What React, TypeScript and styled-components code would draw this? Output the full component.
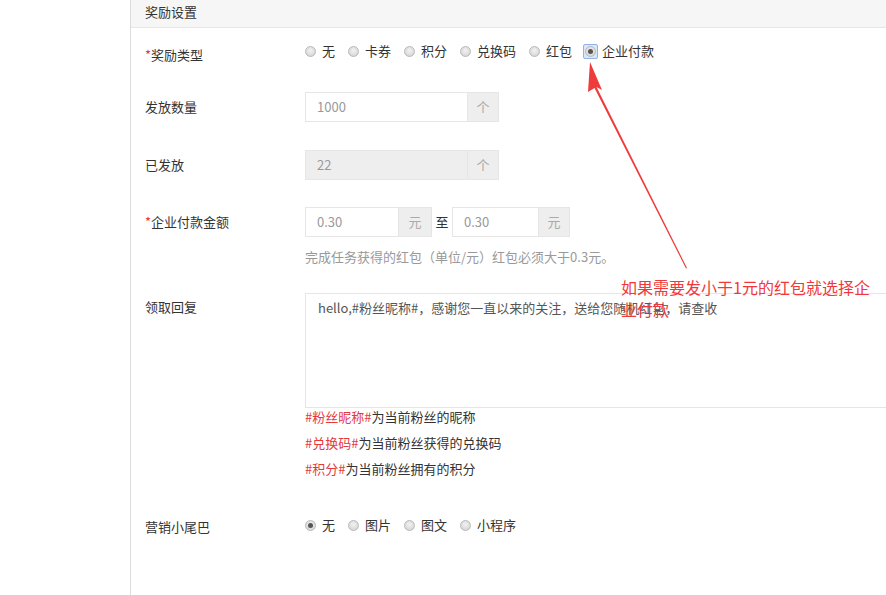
import React from "react";
import styled, { createGlobalStyle } from "styled-components";

const Global = createGlobalStyle`
  html, body { margin: 0; padding: 0; background: #fff; }
  body { font-family: "Microsoft YaHei", "Noto Sans CJK SC", sans-serif; font-size: 13px; color: #333; }
  * { box-sizing: border-box; }
`;

const Page = styled.div`
  position: relative;
  display: flex;
  width: 886px;
  height: 595px;
  overflow: hidden;
`;

const Side = styled.div`
  width: 130px;
  flex: none;
`;

const Main = styled.div`
  flex: 1;
  border-left: 1px solid #dcdcdc;
  min-width: 0;
`;

const Header = styled.div`
  height: 28px;
  background: #f6f6f6;
  border-bottom: 1px solid #e6e6e6;
  padding-left: 14px;
  line-height: 23px;
  font-size: 13px;
  color: #333;
`;

const Form = styled.div`
  padding: 13px 0 0 14px;
`;

const Row = styled.div<{ $mb?: number }>`
  display: flex;
  align-items: flex-start;
  margin-bottom: ${(p) => p.$mb ?? 0}px;
`;

const Label = styled.div<{ $pt?: number; $lh?: number }>`
  width: 160px;
  flex: none;
  padding-top: ${(p) => p.$pt ?? 0}px;
  line-height: ${(p) => p.$lh ?? 20}px;
  color: #333;
  white-space: nowrap;
`;

const Star = styled.span`
  color: #e4393c;
`;

const Controls = styled.div`
  flex: 1;
  min-width: 0;
`;

const RadioGroup = styled.div`
  display: flex;
  align-items: center;
  height: 20px;
`;

const RadioItem = styled.label`
  display: flex;
  align-items: center;
  margin-right: 13px;
  color: #333;
  line-height: 20px;
  white-space: nowrap;
`;

const RadioWrap = styled.span<{ $focus?: boolean }>`
  position: relative;
  display: inline-flex;
  align-items: center;
  justify-content: center;
  width: 11px;
  height: 11px;
  margin-right: 6px;
  ${(p) =>
    p.$focus
      ? `
    &::before {
      content: "";
      position: absolute;
      left: -2px; top: -2px; right: -2px; bottom: -2px;
      border: 1px solid #8fb4ea;
      background: #dce8fa;
      border-radius: 2px;
    }`
      : ""}
`;

const Circle = styled.span<{ $checked?: boolean }>`
  position: relative;
  width: 11px;
  height: 11px;
  border-radius: 50%;
  border: 1px solid #b9b9b9;
  background: radial-gradient(circle at 50% 40%, #f2f2f2 0%, #d6d6d6 80%);
  display: flex;
  align-items: center;
  justify-content: center;
  &::after {
    content: "";
    display: ${(p) => (p.$checked ? "block" : "none")};
    width: 5px;
    height: 5px;
    border-radius: 50%;
    background: #555;
  }
`;

const InputGroup = styled.div`
  display: inline-flex;
  height: 30px;
  vertical-align: top;
`;

const Input = styled.div<{ $w: number; $disabled?: boolean }>`
  width: ${(p) => p.$w}px;
  height: 30px;
  border: 1px solid #e6e6e6;
  border-right: none;
  background: ${(p) => (p.$disabled ? "#eeeeee" : "#fff")};
  padding-left: 11px;
  line-height: 28px;
  color: #999;
  font-size: 13px;
`;

const Addon = styled.div<{ $w: number }>`
  width: ${(p) => p.$w}px;
  height: 30px;
  background: #eeeeee;
  border: 1px solid #e6e6e6;
  color: #aaa;
  text-align: center;
  line-height: 28px;
`;

const To = styled.span`
  display: inline-block;
  width: 20px;
  text-align: center;
  line-height: 30px;
  color: #333;
  vertical-align: top;
`;

const Help = styled.div`
  margin-top: 10px;
  line-height: 20px;
  color: #999;
`;

const TextArea = styled.div`
  width: 620px;
  height: 115px;
  border: 1px solid #e6e6e6;
  padding: 4px 12px;
  line-height: 20px;
  color: #555;
  white-space: nowrap;
`;

const Hints = styled.div`
  margin-top: -4px;
`;

const Hint = styled.div`
  line-height: 26px;
  color: #333;
`;

const Tag = styled.span`
  color: #e4393c;
`;

const Note = styled.div`
  position: absolute;
  left: 621px;
  top: 276px;
  width: 262px;
  font-size: 16px;
  line-height: 22px;
  color: #f0383c;
  font-family: "Microsoft YaHei", "Noto Sans CJK SC", sans-serif;
`;

const ArrowSvg = styled.svg`
  position: absolute;
  left: 0;
  top: 0;
  pointer-events: none;
`;

const Radio = ({ label, checked, focus }: { label: string; checked?: boolean; focus?: boolean }) => (
  <RadioItem>
    <RadioWrap $focus={focus}>
      <Circle $checked={checked} />
    </RadioWrap>
    {label}
  </RadioItem>
);

export default function App() {
  return (
    <>
      <Global />
      <Page>
        <Side />
        <Main>
          <Header>奖励设置</Header>
          <Form>
            <Row $mb={27}>
              <Label $pt={4}>
                <Star>*</Star>奖励类型
              </Label>
              <Controls>
                <RadioGroup>
                  <Radio label="无" />
                  <Radio label="卡券" />
                  <Radio label="积分" />
                  <Radio label="兑换码" />
                  <Radio label="红包" />
                  <Radio label="企业付款" checked focus />
                </RadioGroup>
              </Controls>
            </Row>
            <Row $mb={28}>
              <Label $lh={30}>发放数量</Label>
              <Controls>
                <InputGroup>
                  <Input $w={162}>1000</Input>
                  <Addon $w={32}>个</Addon>
                </InputGroup>
              </Controls>
            </Row>
            <Row $mb={27}>
              <Label $lh={30}>已发放</Label>
              <Controls>
                <InputGroup>
                  <Input $w={162} $disabled>22</Input>
                  <Addon $w={32}>个</Addon>
                </InputGroup>
              </Controls>
            </Row>
            <Row $mb={26}>
              <Label $lh={30}>
                <Star>*</Star>企业付款金额
              </Label>
              <Controls>
                <InputGroup>
                  <Input $w={93}>0.30</Input>
                  <Addon $w={34}>元</Addon>
                </InputGroup>
                <To>至</To>
                <InputGroup>
                  <Input $w={86}>0.30</Input>
                  <Addon $w={32}>元</Addon>
                </InputGroup>
                <Help>完成任务获得的红包（单位/元）红包必须大于0.3元。</Help>
              </Controls>
            </Row>
            <Row $mb={33}>
              <Label $pt={4}>领取回复</Label>
              <Controls>
                <TextArea>hello,#粉丝昵称#，感谢您一直以来的关注，送给您随机红包，请查收</TextArea>
                <Hints>
                  <Hint>
                    <Tag>#粉丝昵称#</Tag>为当前粉丝的昵称
                  </Hint>
                  <Hint>
                    <Tag>#兑换码#</Tag>为当前粉丝获得的兑换码
                  </Hint>
                  <Hint>
                    <Tag>#积分#</Tag>为当前粉丝拥有的积分
                  </Hint>
                </Hints>
              </Controls>
            </Row>
            <Row>
              <Label $pt={2}>营销小尾巴</Label>
              <Controls>
                <RadioGroup>
                  <Radio label="无" checked />
                  <Radio label="图片" />
                  <Radio label="图文" />
                  <Radio label="小程序" />
                </RadioGroup>
              </Controls>
            </Row>
          </Form>
        </Main>
        <ArrowSvg width="886" height="595" viewBox="0 0 886 595">
          <polygon points="590,62 602,90 596.5,87 687,268 686,268.5 594.5,88 588,92" fill="#ee3b3b" />
        </ArrowSvg>
        <Note>如果需要发小于1元的红包就选择企业付款</Note>
      </Page>
    </>
  );
}
